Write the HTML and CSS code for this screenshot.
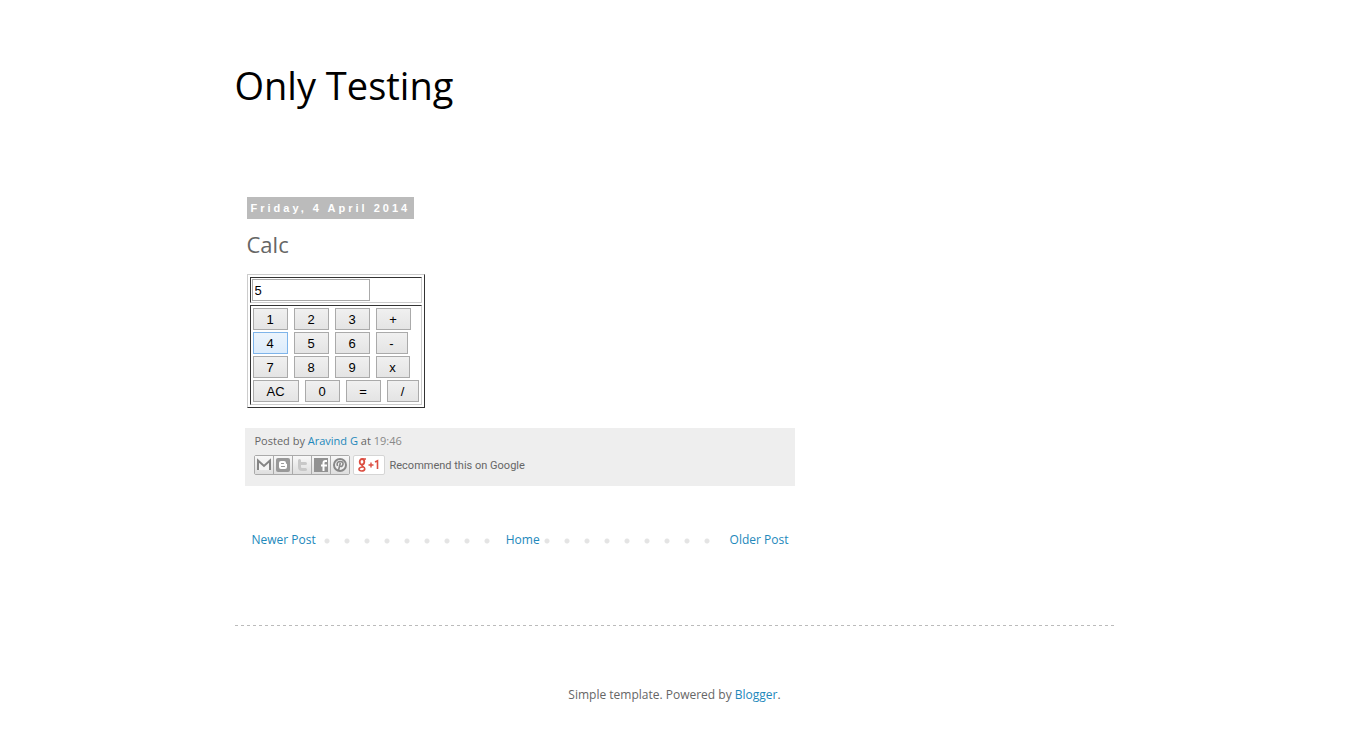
FILE: index.html
```html
<!DOCTYPE html>
<html lang="en">
<head>
<meta charset="utf-8">
<title>Only Testing: Calc</title>
<link rel="stylesheet" href="styles.css">
</head>
<body>
<div class="page">
  <header class="header"><h1 class="title">Only Testing</h1></header>
  <main class="main">
    <h2 class="date"><span class="date-label">Friday, 4 April 2014</span></h2>
    <h3 class="post-title">Calc</h3>
    <form class="calc">
      <div class="cell"><input class="display" type="text" aria-label="Result" value="5"></div>
      <div class="cell keys">
        <div class="row"><button type="button" class="key">1</button><button type="button" class="key">2</button><button type="button" class="key">3</button><button type="button" class="key">+</button></div>
        <div class="row"><button type="button" class="key active">4</button><button type="button" class="key">5</button><button type="button" class="key">6</button><button type="button" class="key narrow">-</button></div>
        <div class="row"><button type="button" class="key">7</button><button type="button" class="key">8</button><button type="button" class="key">9</button><button type="button" class="key times">x</button></div>
        <div class="row"><button type="button" class="key wide">AC</button><button type="button" class="key">0</button><button type="button" class="key">=</button><button type="button" class="key narrow">/</button></div>
      </div>
    </form>
    <footer class="post-footer">
      <p class="byline">Posted by <a href="#">Aravind G</a> at <a class="time" href="#">19:46</a></p>
      <div class="share">
        <div class="share-buttons">
          <a class="share-button" href="#" aria-label="Email This"><svg viewBox="0 0 18 18"><path d="M2 4h14v10H2z" fill="#f4f4f4"/><path d="M3 14V4.500L9 10l6-5.500V14" fill="none" stroke="#858585" stroke-width="2"/></svg></a>
          <a class="share-button" href="#" aria-label="BlogThis!"><svg viewBox="0 0 18 18"><rect x="2" y="2" width="14" height="14" rx="2" fill="#999"/><path d="M5 7q0-2 2-2h3q2 0 2 2 0 1 1 1v3q0 2-2 2H7q-2 0-2-2z" fill="#fff"/><path d="M7.500 7.500h2M7.500 10.500h3" stroke="#999" stroke-width="1.200" stroke-linecap="round"/></svg></a>
          <a class="share-button" href="#" aria-label="Share to Twitter"><svg viewBox="0 0 18 18"><path d="M6.500 4.500v6.500q0 2.500 2.500 2.500h3.500M6.500 7.500h6" fill="none" stroke="#c8c8c8" stroke-width="3" stroke-linecap="round"/></svg></a>
          <a class="share-button" href="#" aria-label="Share to Facebook"><svg viewBox="0 0 18 18"><rect x="2" y="2" width="14" height="14" fill="#929292"/><path d="M11.500 15V7q0-2 2-2h1.500M9 9.500h6" fill="none" stroke="#fff" stroke-width="2"/></svg></a>
          <a class="share-button" href="#" aria-label="Share to Pinterest"><svg viewBox="0 0 18 18"><circle cx="9" cy="9" r="6" fill="#f0f0f0" stroke="#888" stroke-width="2"/><path d="M7.500 14.500l1.800-7.500M6.500 10Q5 6 9 5.500q3.500 0 3 2.800-.8 3-3.200 1.800" fill="none" stroke="#888" stroke-width="1.600"/></svg></a>
        </div>
        <button type="button" class="plus-one" aria-label="+1"><svg viewBox="0 0 30 18"><g fill="none" stroke="#dc4e41"><ellipse cx="8" cy="5.800" rx="2.300" ry="2.800" stroke-width="1.800"/><path d="M8 3h4M9.500 8Q7 9 8.500 10.200 11 11.500 10.800 13q-.5 2-3 2-3-.1-2.800-2 .4-2 4-2" stroke-width="1.600"/><path d="M14.500 9h5M17 6.500v5" stroke-width="1.400"/><path d="M21 6l2.500-1.200V13" stroke-width="1.600"/></g></svg></button>
        <span class="recommend">Recommend this on Google</span>
      </div>
    </footer>
    <nav class="pager"><a href="#">Newer Post</a><a class="home" href="#">Home</a><a href="#">Older Post</a></nav>
  </main>
  <footer class="site-footer">Simple template. Powered by <a href="#">Blogger</a>.</footer>
</div>
</body>
</html>
```
FILE: styles.css
```css
* { box-sizing: border-box; }
body { margin: 0; background: #fff; color: #666; font: 12px/16px "Trebuchet MS", "Open Sans", sans-serif; }
a { color: #2288bb; text-decoration: none; }
h1, h2, h3, p { margin: 0; font-weight: normal; }
.page { max-width: 880px; margin: 0 auto; }
.header { padding: 59px 0 86px; }
.title { color: #000; font-size: 38px; line-height: 52px; }
.main { max-width: 560px; padding: 0 0 0 12px; }
.date { display: flex; }
.date-label { padding: 3px 4px; background: #bbb; color: #fff; font: bold 11px/16px "Liberation Sans", Arial, sans-serif; letter-spacing: 3px; }
.post-title { margin-top: 10px; font-size: 22px; line-height: 30px; }
.calc { display: flex; flex-direction: column; gap: 2px; width: 178px; margin-top: 15px; padding: 2px; border: 1px solid; border-color: #ccc #333 #333 #ccc; }
.cell { display: flex; padding: 1px; border: 1px solid; border-color: #333 #ccc #ccc #333; }
.display { width: 118px; height: 22px; padding: 1px 2px; border: 1px solid #aaa; color: #000; font: 13px "Liberation Sans", Arial, sans-serif; }
.keys { flex-direction: column; gap: 2px; padding: 2px; }
.row { display: flex; gap: 6px; }
.key { width: 35px; height: 22px; padding: 0; border: 1px solid #aaa; background: linear-gradient(#f0f0f0, #e4e4e4); color: #000; font: 13px "Liberation Sans", Arial, sans-serif; }
.active { border-color: #7eb4ea; background: linear-gradient(#ecf4fc, #dcecfc); }
.narrow { width: 32px; }
.times { width: 34px; }
.wide { width: 46px; }
.post-footer { margin: 20px 0 0 -2px; padding: 5px 9px 11px; background: #eee; font-size: 11px; }
.byline { padding-left: 1px; }
.time { color: #888; }
.share { display: flex; align-items: center; margin-top: 6px; }
.share-buttons { display: flex; border: 1px solid #aaa; border-radius: 2px; }
.share-button { width: 19px; height: 18px; border-right: 1px solid #aaa; background: linear-gradient(#f8f8f8, #dedede); }
.share-button:last-child { width: 18px; border-right: 0; }
.share-button svg, .plus-one svg { display: block; width: 100%; height: 18px; }
.plus-one { width: 32px; height: 20px; margin: 0 5px 0 3px; padding: 0; border: 1px solid #d5d5d5; border-radius: 2px; background: #fff; }
.recommend { font: 11px/18px Roboto, sans-serif; padding-top: 2px; }
.pager { display: flex; justify-content: space-between; margin: 42px 0 0 -2px; padding: 3px 6px 3px 7px; line-height: 18px; background: radial-gradient(circle at 10px 10px, #e4e4e4 2px, transparent 3px) -8px 3px / 20px 20px; }
.pager a { background: #fff; padding: 0 8px; margin: 0 -8px; }
.pager .home { padding: 0 3px; margin: 0; }
.site-footer { margin-top: 73px; padding: 62px 0 40px; text-align: center; background: repeating-linear-gradient(90deg, #bbb 0 3px, transparent 3px 6px) 0 0 / 100% 1px no-repeat; }
```
